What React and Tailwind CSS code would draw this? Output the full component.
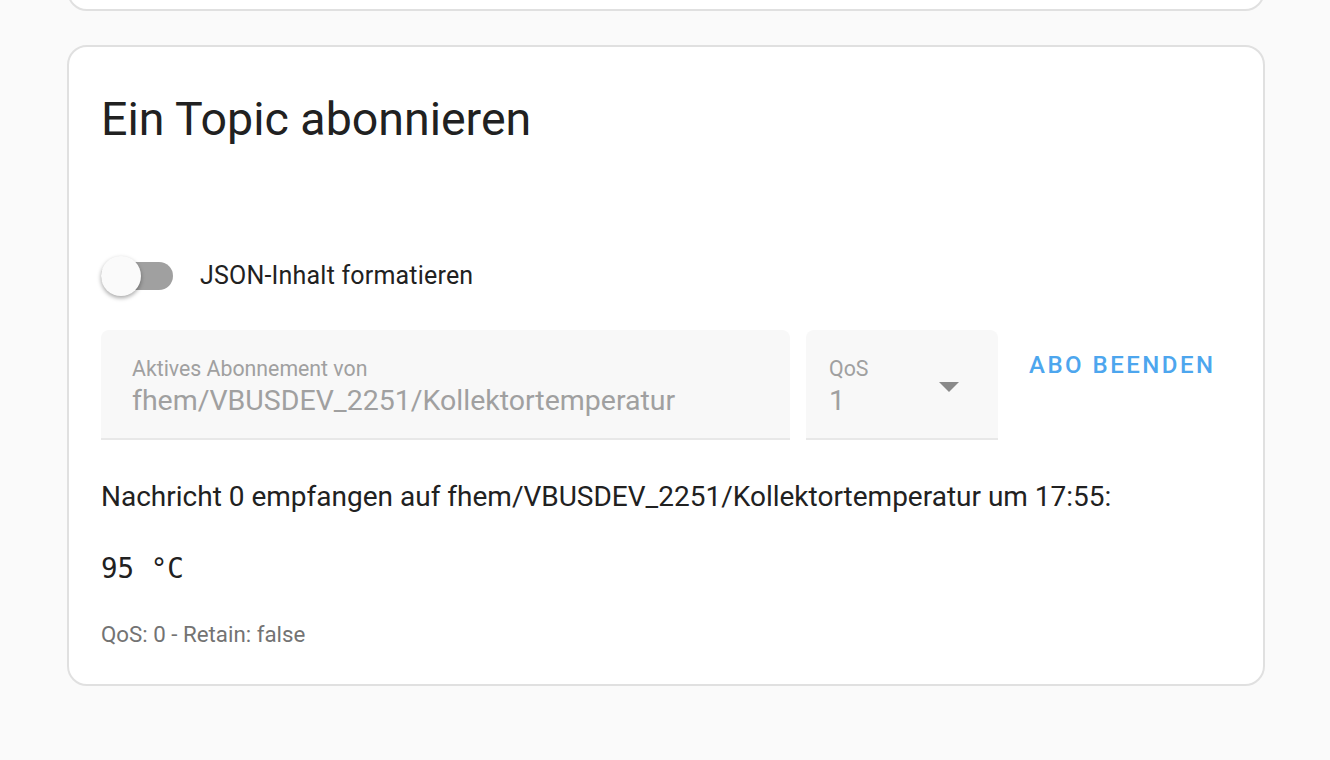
import React, { useState } from "react";

export default function App() {
  const [formatJson, setFormatJson] = useState(false);

  return (
    <div className="min-h-screen bg-[#fafafa] pb-[74px] font-['Roboto',sans-serif] overflow-hidden">
      {/* previous card, only its bottom edge is visible */}
      <div className="ml-[67px] w-[1198px] h-[41px] -mt-[30px] bg-white border-2 border-[#e0e0e0] rounded-[20px]" />

      {/* subscribe card */}
      <div className="ml-[67px] mt-[34px] w-[1198px] bg-white border-2 border-[#e0e0e0] rounded-[20px] px-[32px] pt-[40px] pb-[36px]">
        <h1 className="text-[46.5px] leading-[64px] text-[#212121] font-normal">
          Ein Topic abonnieren
        </h1>

        {/* switch */}
        <div className="mt-[105px] flex items-center h-[40px]">
          <button
            onClick={() => setFormatJson(!formatJson)}
            className="relative w-[72px] h-[40px] flex items-center"
          >
            <span className="block w-[72px] h-[28px] rounded-full bg-[#a0a0a0]" />
            <span className="absolute left-0 top-0 w-[40px] h-[40px] rounded-full bg-[#fafafa] shadow-[0_2px_4px_rgba(0,0,0,0.35)]" />
          </button>
          <span className="ml-[27px] text-[25px] text-[#212121] tracking-[0.2px]">
            JSON-Inhalt formatieren
          </span>
        </div>

        {/* fields */}
        <div className="mt-[34px] flex items-start">
          <div className="w-[689px] h-[110px] bg-[#f8f8f8] rounded-t-[8px] border-b-2 border-[#e8e8e8] px-[31px] pt-[26px]">
            <div className="text-[21.3px] leading-[26px] text-[#a0a0a0]">
              Aktives Abonnement von
            </div>
            <div className="text-[28.5px] leading-[38px] text-[#a0a0a0]">
              fhem/VBUSDEV_2251/Kollektortemperatur
            </div>
          </div>
          <div className="ml-[16px] w-[192px] h-[110px] bg-[#f8f8f8] rounded-t-[8px] border-b-2 border-[#e8e8e8] pl-[23px] pr-[39px] pt-[26px] flex justify-between">
            <div>
              <div className="text-[21.3px] leading-[26px] text-[#a0a0a0]">QoS</div>
              <div className="text-[28.5px] leading-[38px] text-[#a0a0a0]">1</div>
            </div>
            <svg width="20" height="10" viewBox="0 0 20 10" className="mt-[26px]">
              <path d="M0 0 L20 0 L10 10 Z" fill="#8a8a8a" />
            </svg>
          </div>
          <button className="ml-[15px] mt-[13px] pl-[16px] h-[44px] text-[24px] font-medium tracking-[2.5px] text-[#4da6ee]">
            ABO BEENDEN
          </button>
        </div>

        {/* message */}
        <p className="mt-[40px] text-[28px] leading-[34px] text-[#212121]">
          Nachricht 0 empfangen auf fhem/VBUSDEV_2251/Kollektortemperatur um 17:55:
        </p>
        <pre className="mt-[36px] font-['DejaVu_Sans_Mono',monospace] text-[27.5px] leading-[36px] text-[#212121]">
          95 °C
        </pre>
        <p className="mt-[34px] text-[22.3px] leading-[28px] text-[#737373]">
          QoS: 0 - Retain: false
        </p>
      </div>
    </div>
  );
}
